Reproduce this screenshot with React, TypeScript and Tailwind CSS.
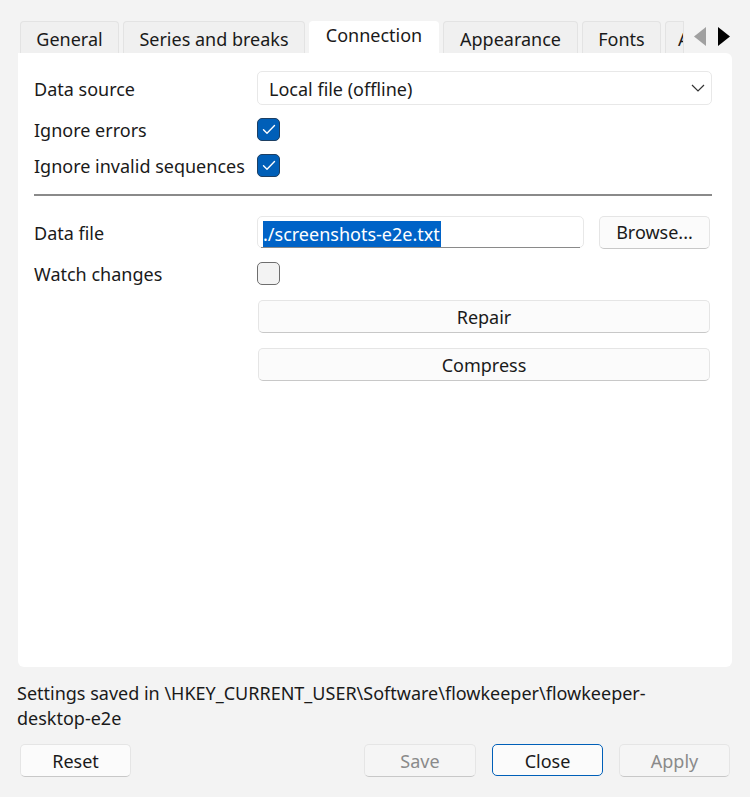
import React from "react";

const font = { fontFamily: '"Noto Sans", "Segoe UI", sans-serif' };

function Check({ checked }: { checked: boolean }) {
  if (checked)
    return (
      <div className="w-[23px] h-[23px] rounded-[5px] bg-[#005fb8] border border-[#1d3f63] flex items-center justify-center">
        <svg width="14" height="11" viewBox="0 0 14 11" fill="none">
          <path d="M1.5 5.8 L5 9.2 L12.5 1.6" stroke="white" strokeWidth="1.4" strokeLinecap="round" strokeLinejoin="round" />
        </svg>
      </div>
    );
  return <div className="w-[23px] h-[23px] rounded-[5px] bg-[#f3f3f3] border border-[#6e6e6e]" />;
}

function Tab({ label, active, w }: { label: string; active?: boolean; w: string }) {
  return (
    <div
      className={
        active
          ? `${w} h-[32px] bg-white rounded-t-[4px] flex items-center justify-center text-[#1a1a1a] pb-[3px]`
          : `${w} h-[32px] bg-[#f0f0f0] border border-[#e3e3e3] border-b-0 rounded-t-[4px] flex items-center justify-center text-[#1a1a1a] pt-[3px]`
      }
    >
      {label}
    </div>
  );
}

function Btn({ children, className = "", disabled }: { children: React.ReactNode; className?: string; disabled?: boolean }) {
  return (
    <div
      className={`h-[33px] rounded-[5px] border border-[#e5e5e5] border-b-[#c8c8c8] flex items-center justify-center ${
        disabled ? "bg-[#f5f5f5] text-[#8a8a8a]" : "bg-[#fbfbfb] text-[#1a1a1a]"
      } ${className}`}
    >
      {children}
    </div>
  );
}

export default function App() {
  return (
    <div className="w-[750px] h-[797px] bg-[#f3f3f3] text-[18px] text-[#1a1a1a] overflow-hidden" style={font}>
      <div className="pt-[21px] pl-[20px] flex items-start">
        <div className="flex gap-[4px] w-[668px] overflow-hidden">
          <Tab label="General" w="w-[99px] shrink-0" />
          <Tab label="Series and breaks" w="w-[182px] shrink-0" />
          <Tab label="Connection" active w="w-[130px] shrink-0" />
          <Tab label="Appearance" w="w-[135px] shrink-0" />
          <Tab label="Fonts" w="w-[79px] shrink-0" />
          <div className="w-[19px] shrink-0 h-[32px] bg-[#f0f0f0] border border-[#e3e3e3] border-b-0 rounded-tl-[4px] pt-[3px] pl-[12px] overflow-hidden flex items-center">A</div>
        </div>
        <div className="flex items-center gap-[12px] ml-[6px] mt-[6px]">
          <svg width="12" height="19" viewBox="0 0 12 19"><path d="M12 0 L0 9.5 L12 19 Z" fill="#a0a0a0" /></svg>
          <svg width="12" height="19" viewBox="0 0 12 19"><path d="M0 0 L12 9.5 L0 19 Z" fill="#000" /></svg>
        </div>
      </div>
      <div className="mx-[18px] w-[714px] h-[614px] bg-white rounded-b-[6px] rounded-tr-[6px] pl-[16px] pr-[20px] pt-[18px]">
        <div className="flex items-center h-[34px]">
          <div className="w-[223px] pt-[2px]">Data source</div>
          <div className="flex-1 h-[34px] rounded-[5px] border border-[#e8e8e8] flex items-center justify-between pl-[11px] pr-[6px]">
            <span className="pt-[2px]">Local file (offline)</span>
            <svg width="14" height="8" viewBox="0 0 14 8" fill="none"><path d="M1 1 L7 7 L13 1" stroke="#333" strokeWidth="1.2" /></svg>
          </div>
        </div>
        <div className="flex items-center h-[24px] mt-[12px]">
          <div className="w-[223px] pt-[3px]">Ignore errors</div>
          <Check checked />
        </div>
        <div className="flex items-center h-[24px] mt-[12px]">
          <div className="w-[223px] pt-[3px]">Ignore invalid sequences</div>
          <Check checked />
        </div>
        <div className="h-[2px] bg-[#8a8a8a] mt-[17px]" />
        <div className="flex items-center h-[32px] mt-[20px]">
          <div className="w-[223px] pt-[2px]">Data file</div>
          <div className="w-[327px] h-[32px] rounded-[5px] border border-[#e8e8e8] relative flex items-center pl-[5px]">
            <span className="bg-[#0063c7] text-white h-[26px] mt-[4px] leading-[26px] pr-[1px]">./screenshots-e2e.txt</span>
            <div className="absolute left-[3px] right-[3px] bottom-[-1px] h-[1px] bg-[#8a8a8a]" />
          </div>
          <Btn className="w-[111px] ml-[15px] h-[32px]">Browse...</Btn>
        </div>
        <div className="flex items-center h-[24px] mt-[13px]">
          <div className="w-[223px] pt-[3px]">Watch changes</div>
          <Check checked={false} />
        </div>
        <div className="pl-[224px] pr-[2px] mt-[15px] flex flex-col gap-[15px]">
          <Btn className="pt-[2px]">Repair</Btn>
          <Btn className="pt-[2px]">Compress</Btn>
        </div>
      </div>
      <div className="px-[17px] mt-[14px] leading-[25px] whitespace-nowrap">
        Settings saved in \HKEY_CURRENT_USER\Software\flowkeeper\flowkeeper-
        <br />
        desktop-e2e
      </div>
      <div className="flex px-[20px] mt-[13px]">
        <Btn className="w-[111px] h-[32px] pt-[2px]">Reset</Btn>
        <div className="flex-1" />
        <Btn disabled className="w-[112px] h-[32px] pt-[2px]">Save</Btn>
        <div className="w-[111px] h-[32px] ml-[16px] pt-[2px] rounded-[5px] border border-[#005fb8] bg-[#fbfbfb] flex items-center justify-center">Close</div>
        <Btn disabled className="w-[111px] ml-[16px] h-[32px] pt-[2px]">Apply</Btn>
      </div>
    </div>
  );
}
